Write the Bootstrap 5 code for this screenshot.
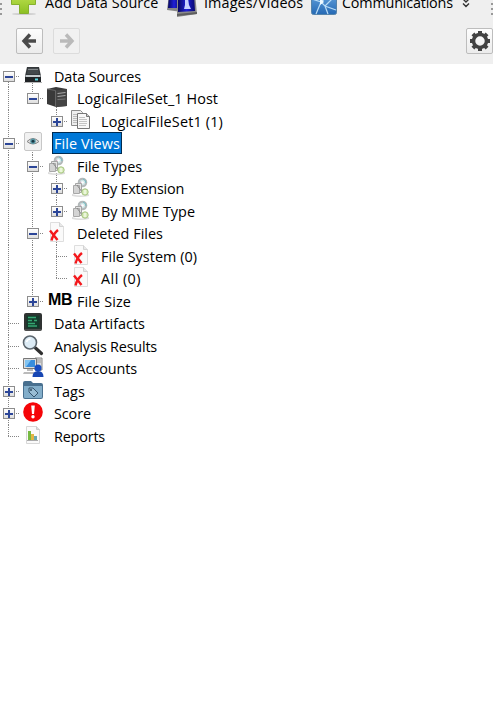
<!DOCTYPE html>
<html lang="en">
<head>
<meta charset="utf-8">
<meta name="viewport" content="width=device-width, initial-scale=1">
<title>Case Explorer</title>
<link href="https://cdn.jsdelivr.net/npm/bootstrap@5.3.0/dist/css/bootstrap.min.css" rel="stylesheet">
<style>
body{font-family:"Open Sans","Noto Sans",sans-serif;font-size:14.4px;letter-spacing:-.1px;line-height:22px;color:#000;background:#fff;height:717px}
svg{display:block;flex:none}
.toolbar-area{background:#efefef;height:64px}
.tools{height:26px;margin-top:-9px}
.tools span{line-height:24px;height:26px}
.t-add{flex:0 0 156px;margin-left:9px}
.t-img{flex:0 0 144px}
.t-com{flex:0 0 150px}
.add-text{letter-spacing:.1px}
.img-text{letter-spacing:.1px}
.com-text{letter-spacing:-.2px}
.navs{margin-top:11px;padding-left:16px}
.tool-btn{width:27px;height:26px;padding:0;border:1px solid #bdbdbd;border-radius:2px;background:linear-gradient(#fdfdfd,#ececec);display:flex;align-items:center;justify-content:center}
.tool-btn:disabled{border-color:#dcdcdc;background:#f1f1f1;opacity:1}
.forward{margin-left:10px}
.tree{padding-top:1px}
.node{height:23px}
.node:nth-child(odd){height:22px}
.cell{width:24px;flex:none;position:relative}
.v::before,.vt::before,.kids::before{content:"";position:absolute;left:8px;top:0;bottom:0;width:1px;background:repeating-linear-gradient(#858585 0 1px,transparent 1px 2px)}
.vt::before{bottom:auto;height:12px}
.vb::before{top:11px}
.kids::before{top:18px}
.h::after{content:"";position:absolute;left:8px;top:11px;width:12px;height:1px;background:repeating-linear-gradient(90deg,#858585 0 1px,transparent 1px 2px)}
.box{position:absolute;z-index:1;left:3px;top:6px;width:12px;height:11px;border:1px solid #8d8d8d;background:linear-gradient(#fff,#dedede)}
.box::before,.plus::after{content:"";position:absolute;left:1px;top:4px;width:8px;height:2px;background:#2c4698}
.plus::after{left:4px;top:1px;width:2px;height:8px}
.pic{margin-left:-2px;position:relative;z-index:1}
.label{margin-left:4px;padding:0 2px;height:22px;line-height:23px;white-space:nowrap}
.deep{margin-left:3px}
.picked{background:#0078d7;color:#fff;border:1px solid #002b50;padding:0 1px;line-height:21px}
.mb{font:bold 16px/19px "Liberation Sans",sans-serif;letter-spacing:-.4px;display:block;margin-left:0}
</style>
</head>
<body class="overflow-hidden">
<svg width="0" height="0" class="position-absolute">
<defs>
<linearGradient id="green" x2="0" y2="1"><stop stop-color="#c8e85a"/><stop offset="1" stop-color="#8cc022"/></linearGradient>
<linearGradient id="blue" x2="0" y2="1"><stop stop-color="#74b2e8"/><stop offset="1" stop-color="#2569b4"/></linearGradient>
<linearGradient id="navy"><stop stop-color="#080860"/><stop offset=".5" stop-color="#2020d8"/><stop offset="1" stop-color="#080870"/></linearGradient>
<symbol id="drive" viewBox="0 0 22 22"><path d="M5 2h12l2 9v6H3v-6z" fill="#34383b"/><path d="M6 3h10l1 6H5z" fill="#43484b"/><path d="M6 4.500h10" stroke="#84898c"/><path d="M3.500 10h15v2h-15z" fill="#c5cbce"/><path d="M3 12h16v5H3z" fill="#202326"/><path d="M13 13.500h3v2h-3z" fill="#59d6df"/><path d="M2 17.500h18" stroke="#b5b5b5"/></symbol>
<symbol id="server" viewBox="0 0 22 22"><path d="M1 2l9-2 11 2v17l-11 1-9-3z" fill="#3a3a3a"/><path d="M9.500 3.500L21 2v17l-11.500 1z" fill="#444"/><path d="M1 2l8.500 1.500V20" fill="none" stroke="#666"/><path d="M11.500 6.500l8-1M11.500 9.500l8-1" stroke="#aaa"/><path d="M11.500 12.500l8-.5" stroke="#777"/></symbol>
<symbol id="copies" viewBox="0 0 22 22"><path d="M1.500.5h9l2 2v13h-11z" fill="#eee" stroke="#8b8b8b"/><path d="M3 4.500h6M3 6.500h5M3 8.500h5M3 10.500h5M3 12.500h5" stroke="#bbb"/><path d="M7.500 3.500h9l3 3v12h-12z" fill="#f8f8f8" stroke="#777"/><path d="M16.500 3.500v3h3" fill="#ccc" stroke="#777"/><path d="M9 7.500h6M9 9.500h8M9 11.500h8M9 13.500h8M9 15.500h7" stroke="#c4c4c4"/></symbol>
<symbol id="eye" viewBox="0 0 22 22"><rect x="2.500" y=".5" width="17" height="18" rx="1.500" fill="#f1f1f1" stroke="#c7c7c7"/><path d="M5 9.500q6-6 12 0-6 5-12 0" fill="#ddd" stroke="#888"/><circle cx="11" cy="9.300" r="2.700" fill="#5597a4"/><circle cx="11" cy="9.300" r="1.400" fill="#173440"/></symbol>
<symbol id="types" viewBox="0 0 22 22"><path d="M2 17q10 3 17 0v2q-9 2-17 0z" fill="#ddd"/><circle cx="12.500" cy="5.500" r="3.800" fill="#cfe3e5" stroke="#b3b8b9" stroke-width="2"/><path d="M13 2q3 1 3 4" stroke="#75bfc6" fill="none"/><path d="M10 5l2 1" stroke="#ce9bb7"/><circle cx="12.500" cy="5.500" r="1.300" fill="#fff"/><path d="M5.500 6.500h6v9h-6z" fill="#e4e4e4" stroke="#a5a5a5"/><path d="M3.500 8.500h6v8h-6z" fill="#d4d4d4" stroke="#a8a8a8"/><path d="M7 8l5 7" stroke="#888"/><circle cx="15" cy="15" r="3.200" fill="#d8edba" stroke="#a6c382"/><path d="M15 13v4" stroke="#fff"/></symbol>
<symbol id="deleted" viewBox="0 0 22 22"><path d="M4.500.5h9l4 4v15h-13z" fill="#fafafa" stroke="#dedede"/><path d="M13.500.5v4h4" fill="#e8e8e8" stroke="#d3d3d3"/><path d="M4 8.500l7.500 9.500M12 8q-5 4-6.500 10.500" fill="none" stroke="#f4181c" stroke-width="2.400"/></symbol>
<symbol id="artifact" viewBox="0 0 22 22"><rect x="2" y="1" width="18" height="18" rx="2" fill="#303332"/><rect x="4.500" y="3.500" width="13" height="13" fill="#133a2b"/><path d="M6 5.500h8M6 8.500h4M12 8.500h3M6 11.500h7M6 14h9" stroke="#35a772" stroke-width="1.500"/><path d="M3 18h16" stroke="#666"/></symbol>
<symbol id="lens" viewBox="0 0 22 22"><path d="M13.500 13l6 5.500" stroke="#303030" stroke-width="3.200" stroke-linecap="round"/><circle cx="8" cy="7.500" r="6.500" fill="#dcebf5" stroke="#5b656d" stroke-width="1.600"/><path d="M4.500 7q1-3 4-3" fill="none" stroke="#fff" stroke-width="1.500"/></symbol>
<symbol id="account" viewBox="0 0 22 22"><path d="M13 1h7v12h-7z" fill="#ddd" stroke="#888"/><path d="M14 3h5M14 5h5" stroke="#999"/><path d="M1.500 1.500h13v10h-13z" fill="#ddd" stroke="#777"/><path d="M3 3h10v7H3z" fill="#388edd"/><path d="M3 3h6l-5 7H3z" fill="#81c4f2"/><path d="M5 12h6v2H5zM2 15h10v2H1z" fill="#bbb"/><circle cx="16" cy="11" r="3.500" fill="#174cc0"/><path d="M10.500 20q0-6 5.500-6t5.500 6z" fill="#1746b3"/></symbol>
<symbol id="tag" viewBox="0 0 22 22"><path d="M1 3q0-2 2-2h6l2 2h8q2 0 2 2v12q0 2-2 2H3q-2 0-2-2z" fill="#49708f"/><path d="M2 6h18v11q0 1-1 1H3q-1 0-1-1z" fill="#83aeca"/><path d="M7 8h4l5 5-4 4-5-5z" fill="#99bdd4" stroke="#35546d"/><circle cx="9" cy="10" r="1" fill="#304b60"/></symbol>
<symbol id="score" viewBox="0 0 22 22"><circle cx="11" cy="10" r="9.800" fill="#f50508"/><path d="M9.200 3.500h3.600l-.8 8.500h-2z" fill="#fff"/><circle cx="11" cy="14.800" r="1.700" fill="#fff"/></symbol>
<symbol id="report" viewBox="0 0 22 22"><path d="M4.500 1.500h10l3 3v14h-13z" fill="#fafafa" stroke="#d7d7d7"/><path d="M14.500 1.500v3h3" fill="#ddd" stroke="#ccc"/><path d="M6 6h3v9H6z" fill="#77ba43"/><path d="M9 9h3v6H9z" fill="#e1b544"/><path d="M12 11h3v4h-3z" fill="#69a9b1"/><path d="M5 15.500h11" stroke="#aaa"/></symbol>
</defs>
</svg>

<header class="toolbar-area overflow-hidden">
 <div class="tools d-flex">
  <svg width="2" height="26"><path d="M0 12h2v2H0zM0 17h2v2H0zM0 22h2v2H0z" fill="#999"/></svg>
  <div class="t-add d-flex"><svg width="34" height="26"><ellipse cx="13" cy="23" rx="12" ry="1" fill="#ccc"/><path d="M8.500-2h9v9h7v6h-7v9h-9v-9h-8V7h8z" transform="translate(0 .5)" fill="url(#green)" stroke="#86b12e"/></svg><span class="text-nowrap add-text">Add Data Source</span></div>
  <div class="t-img d-flex"><svg width="37" height="26"><path d="M2 4l13-2v19L0 19z" fill="#888"/><path d="M2 5h11v12L1 17z" fill="url(#navy)"/><path d="M10 3l18-1 2 21-20 3z" fill="#8b8b8b"/><path d="M10 23l20-2v2l-20 2z" fill="#5e5e5e"/><path d="M11 4h16l1 16-17 1z" fill="url(#navy)"/><path d="M18 7h3l1 7 2 4h-7l1-4z" fill="#c7d0ff"/></svg><span class="text-nowrap img-text">Images/Videos</span></div>
  <div class="t-com d-flex"><svg width="31" height="26"><rect x=".5" y="-3" width="25" height="26.500" rx="2" fill="url(#blue)" stroke="#5684aa"/><path d="M1 8l9 3 4 4 11 4M5 23l5-12 8-7M14 15l3 8M14 15l8-8" fill="none" stroke="#b9dcf6" stroke-width="1.200"/><path d="M9 7l4 4-4 3z" fill="#eef9ff"/></svg><span class="text-nowrap com-text">Communications</span></div>
  <svg width="10" height="26"><path d="M2 8l3 3 3-3M2 12.500l3 3 3-3" fill="none" stroke="#333" stroke-width="1.400"/></svg>
  <svg class="ms-auto" width="3" height="26"><path d="M1 12h2v2H1zM1 17h2v2H1zM1 22h2v2H1z" fill="#999"/></svg>
 </div>
 <div class="navs d-flex">
  <button class="tool-btn" aria-label="Back"><svg width="17" height="18"><path d="M9 2.500L3 9l6 6.500M3 9h12" fill="none" stroke="#4b4b4b" stroke-width="3.400"/></svg></button>
  <button class="tool-btn forward" disabled aria-label="Forward"><svg width="17" height="18"><path d="M8 2.500L14 9l-6 6.500M14 9H2" fill="none" stroke="#bababa" stroke-width="3.400"/></svg></button>
  <button class="tool-btn ms-auto" aria-label="Options"><svg width="22" height="22" viewBox="-11 -11 22 22"><circle r="6.500" fill="none" stroke="#424242" stroke-width="3.500"/><g fill="#424242"><path id="teeth" d="M-2-10h4v3h-4zM-2 7h4v3h-4zM-10-2h3v4h-3zM7-2h3v4H7z"/><use href="#teeth" transform="rotate(45)"/></g></svg></button>
 </div>
</header>

<main class="tree" id="tree"></main>
<script>
// [label, icon, guide classes for each level, expander sign, has visible children, label width]
const nodes = [
 ["Data Sources","drive",["v vb h"],"-",1,87],
 ["LogicalFileSet_1 Host","server",["v","vt h"],"-",1,141],
 ["LogicalFileSet1 (1)","copies",["v","","vt h"],"+",0,122],
 ["File Views","eye",["v h"],"-",1,66],
 ["File Types","types",["v","v h"],"-",1,65],
 ["By Extension","types",["v","v","v h"],"+",0,83],
 ["By MIME Type","types",["v","v","vt h"],"+",0,94],
 ["Deleted Files","deleted",["v","v h"],"-",1,86],
 ["File System (0)","deleted",["v","v","v h"],"",0,96],
 ["All (0)","deleted",["v","v","vt h"],"",0,40],
 ["File Size","MB",["v","vt h"],"+",0,54],
 ["Data Artifacts","artifact",["v h"],"",0,91],
 ["Analysis Results","lens",["v h"],"",0,103],
 ["OS Accounts","account",["v h"],"",0,83],
 ["Tags","tag",["v h"],"+",0,31],
 ["Score","score",["v h"],"+",0,37],
 ["Reports","report",["vt h"],"",0,51]
];
const tree = document.getElementById("tree");
tree.innerHTML = nodes.map(([label, icon, guides, sign, open]) => {
  const cells = guides.map((g, i) => `<div class="cell ${g}">${sign && i === guides.length - 1 ? `<div class="box ${sign === "+" ? "plus" : ""}"></div>` : ""}</div>`).join("");
  const pic = icon === "MB" ? '<span class="pic mb">MB</span>' : `<svg class="pic" width="22" height="22"><use href="#${icon}"/></svg>`;
  return `<div class="node d-flex">${cells}<div class="cell ${open ? "kids" : ""}">${pic}</div><div class="label ${guides.length > 1 ? "deep" : ""} ${label === "File Views" ? "picked" : ""}"><span>${label}</span></div></div>`;
}).join("");
tree.querySelectorAll(".label span").forEach((s, i) => {
  const n = nodes[i][0].length;
  const gap = (nodes[i][5] - s.getBoundingClientRect().width) / n - 0.1;
  s.style.letterSpacing = gap.toFixed(3) + "px";
});
</script>
</body>
</html>
